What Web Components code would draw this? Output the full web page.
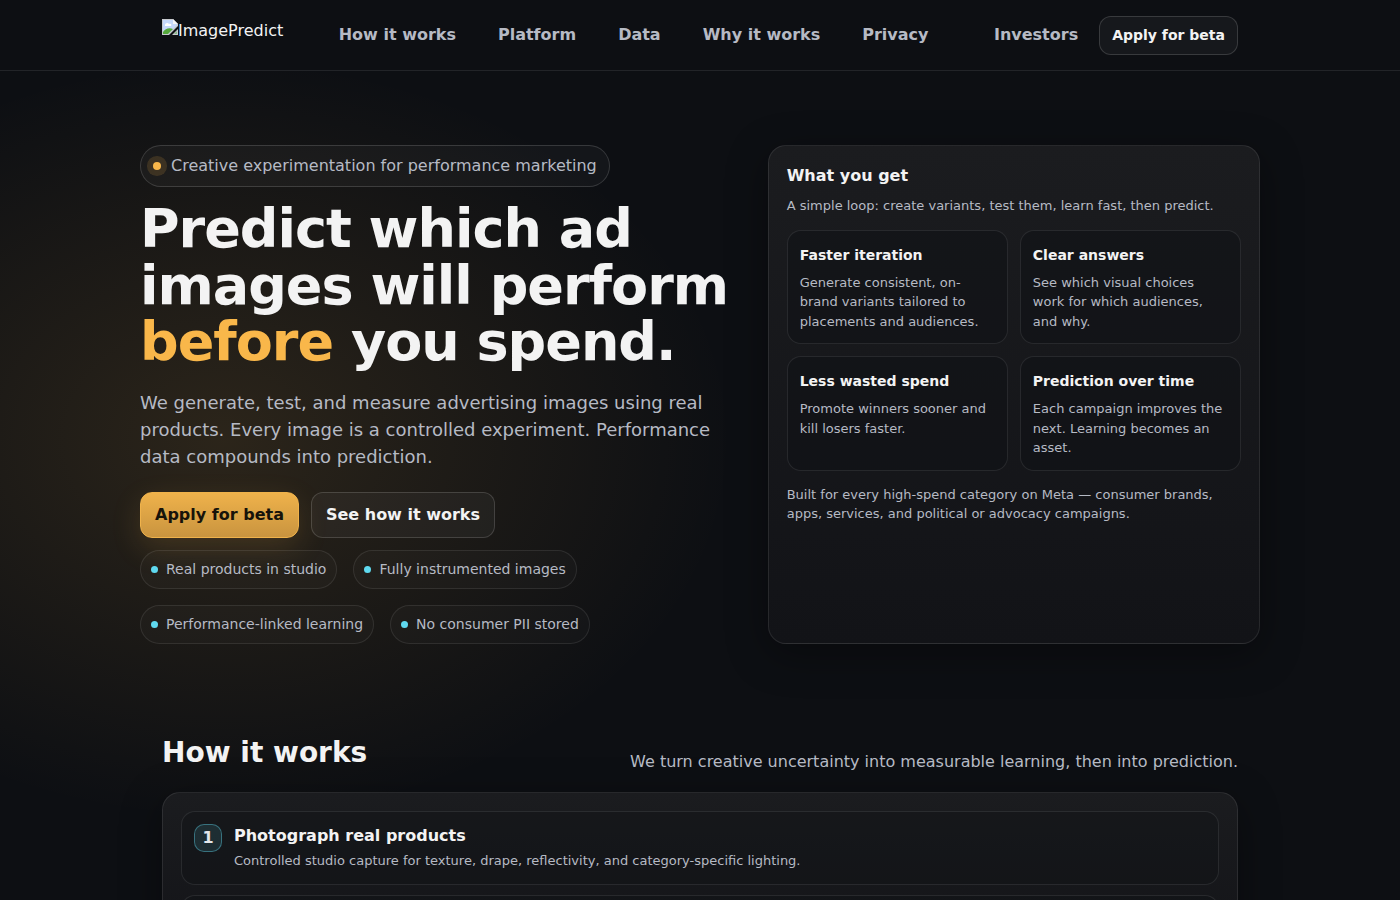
<!DOCTYPE html>
<html lang="en">
<head>
<meta charset="utf-8">
<meta name="viewport" content="width=device-width, initial-scale=1">
<title>ImagePredict</title>
<style>
:root {
  --text: #f3f3f3;
  --muted: #b6bac4;
  --line: rgba(255,255,255,.09);
  --line-strong: rgba(255,255,255,.15);
  --amber: #f9b74a;
  --cyan: #5fd9ef;
}
html { background: #0d0f13; }
body {
  margin: 0;
  color: var(--text);
  font: 16px/1.5 "DejaVu Sans", sans-serif;
  background: radial-gradient(510px 380px at 16% 440px, rgba(249,183,74,.13), rgba(249,183,74,0)) no-repeat;
}
</style>
</head>
<body>
<site-header></site-header>
<main>
  <hero-section></hero-section>
  <how-section></how-section>
</main>
<script>
const define = (name, html) => {
  const template = document.createElement('template');
  template.innerHTML = '<style>*{box-sizing:border-box}h1,h2,h3,p{margin:0}a{color:inherit;text-decoration:none}</style>' + html;
  customElements.define(name, class extends HTMLElement {
    constructor() {
      super();
      this.attachShadow({ mode: 'open' }).append(template.content.cloneNode(true));
    }
    connectedCallback() {
      const link = this.shadowRoot.querySelector('a[data-link]');
      if (link) link.href = this.getAttribute('href') || '#';
    }
  });
};

define('brand-logo', `
<style>
:host { display: block; }
a { display: flex; align-items: flex-start; height: 32px; }
svg { width: 16px; height: 16px; flex: none; }
</style>
<a data-link><svg viewBox="0 0 16 16" aria-hidden="true">
  <path d="M0 0h11l5 5v2L7 16H0z" fill="#c6c9ce"/>
  <path d="M1 1h10v4h4v1L6 15H1z" fill="#c5d8fb"/>
  <path d="M3 6c0-2 3-3 4-1 2-1 3 1 2 2H3z" fill="#fff"/>
  <path d="M1 15v-2c2-3 6-5 10-3l-5 5z" fill="#55a83c"/>
  <path d="M11 0v5h5z" fill="#f4f5f7"/>
  <path d="M16 10v6h-6z" fill="#c6c9ce"/><path d="M15 12v3h-3z" fill="#86b985"/>
</svg><slot></slot></a>`);

define('nav-link', `
<style>
:host { display: block; color: var(--muted); font-weight: 700; }
a { display: block; padding: 8px 10px; }
</style>
<a data-link><slot></slot></a>`);

define('action-button', `
<style>
:host { display: block; }
button {
  display: block; margin: 0; padding: 10px 14px; cursor: pointer;
  font: inherit; font-weight: 700; color: var(--text);
  border: 1px solid var(--line-strong); border-radius: 12px;
  background: rgba(255,255,255,.04);
}
:host([small]) button { padding: 8px 12px; font-size: 14px; }
:host([primary]) button {
  color: #17130a; border-color: #efb24b;
  background: linear-gradient(#efb24b, #c9943f);
  box-shadow: 0 10px 30px rgba(249,183,74,.15);
}
</style>
<button type="button"><slot></slot></button>`);

define('site-header', `
<style>
:host { display: block; background: #0d0f13; border-bottom: 1px solid var(--line); }
.bar {
  display: flex; align-items: center; justify-content: space-between;
  max-width: 1120px; margin: 0 auto; padding: 15px 22px; box-sizing: border-box;
}
nav { display: flex; gap: 22px; }
.side { display: flex; align-items: center; gap: 11px; }
</style>
<div class="bar">
  <brand-logo href="#top">ImagePredict</brand-logo>
  <nav aria-label="Primary">
    <nav-link href="#how">How it works</nav-link>
    <nav-link href="#platform">Platform</nav-link>
    <nav-link href="#data">Data</nav-link>
    <nav-link href="#why">Why it works</nav-link>
    <nav-link href="#privacy">Privacy</nav-link>
  </nav>
  <div class="side">
    <nav-link href="#investors">Investors</nav-link>
    <action-button small>Apply for beta</action-button>
  </div>
</div>`);

define('eyebrow-pill', `
<style>
:host {
  display: inline-flex; align-items: center; gap: 10px; padding: 8px 12px;
  border: 1px solid var(--line-strong); border-radius: 999px;
  background: rgba(255,255,255,.03); color: var(--muted);
}
i { width: 8px; height: 8px; border-radius: 50%; background: var(--amber); box-shadow: 0 0 0 6px rgba(249,183,74,.15); }
</style>
<i></i><slot></slot>`);

define('fact-chip', `
<style>
:host {
  display: flex; align-items: center; gap: 8px; padding: 8px 10px;
  border: 1px solid var(--line); border-radius: 999px;
  background: rgba(255,255,255,.02); color: var(--muted); font-size: 14px;
}
i { width: 7px; height: 7px; border-radius: 50%; background: var(--cyan); }
</style>
<i></i><slot></slot>`);

define('surface-card', `
<style>
:host {
  display: block; padding: 18px; border: 1px solid var(--line); border-radius: 18px;
  background: linear-gradient(#1b1c1f, #121317);
  box-shadow: 0 10px 40px rgba(0,0,0,.35);
}
</style>
<slot></slot>`);

define('feature-tile', `
<style>
:host {
  display: block; padding: 12px; border: 1px solid var(--line); border-radius: 14px;
  background: rgba(13,15,19,.5);
}
h3 { margin-bottom: 6px; font-size: 14px; line-height: 24px; }
p { font-size: 13px; color: var(--muted); }
</style>
<h3><slot name="title"></slot></h3><p><slot></slot></p>`);

define('step-row', `
<style>
:host {
  display: flex; align-items: flex-start; gap: 12px; padding: 12px 12px 13px;
  border: 1px solid var(--line); border-radius: 14px; background: rgba(13,15,19,.3);
}
.badge {
  display: grid; place-items: center; flex: none; width: 28px; height: 28px;
  border: 1px solid rgba(95,217,239,.4); border-radius: 10px;
  background: rgba(95,217,239,.12); color: #e2e6ea; font-weight: 700;
}
h3 { margin-bottom: 3px; font-size: 16px; }
p { font-size: 13px; color: var(--muted); }
</style>
<span class="badge"><slot name="number"></slot></span>
<div><h3><slot name="title"></slot></h3><p><slot></slot></p></div>`);

define('hero-section', `
<style>
:host {
  display: grid; grid-template-columns: 11fr 9fr; gap: 26px;
  max-width: 1120px; margin: 0 auto; padding: 74px 0 44px;
}
eyebrow-pill { margin-bottom: 14px; vertical-align: top; }
h1 { font-size: 54px; line-height: 1.05; letter-spacing: -1px; }
em { font-style: normal; color: var(--amber); }
.lead { margin: 18px 0 22px; font-size: 18px; color: var(--muted); }
.actions { display: flex; gap: 12px; margin-bottom: 12px; }
.chips { display: flex; flex-wrap: wrap; gap: 16px; }
h2 { margin-bottom: 8px; font-size: 16px; }
.note { font-size: 13px; color: var(--muted); }
.tiles { display: grid; grid-template-columns: 1fr 1fr; gap: 12px; margin: 14px 0; }
</style>
<div>
  <eyebrow-pill>Creative experimentation for performance marketing</eyebrow-pill>
  <h1>Predict which ad images will perform <em>before</em> you spend.</h1>
  <p class="lead">We generate, test, and measure advertising images using real products. Every image is a controlled experiment. Performance data compounds into prediction.</p>
  <div class="actions">
    <action-button primary>Apply for beta</action-button>
    <action-button>See how it works</action-button>
  </div>
  <div class="chips">
    <fact-chip>Real products in studio</fact-chip>
    <fact-chip>Fully instrumented images</fact-chip>
    <fact-chip>Performance-linked learning</fact-chip>
    <fact-chip>No consumer PII stored</fact-chip>
  </div>
</div>
<surface-card>
  <h2>What you get</h2>
  <p class="note">A simple loop: create variants, test them, learn fast, then predict.</p>
  <div class="tiles">
    <feature-tile><span slot="title">Faster iteration</span>Generate consistent, on-brand variants tailored to placements and audiences.</feature-tile>
    <feature-tile><span slot="title">Clear answers</span>See which visual choices work for which audiences, and why.</feature-tile>
    <feature-tile><span slot="title">Less wasted spend</span>Promote winners sooner and kill losers faster.</feature-tile>
    <feature-tile><span slot="title">Prediction over time</span>Each campaign improves the next. Learning becomes an asset.</feature-tile>
  </div>
  <p class="note">Built for every high-spend category on Meta — consumer brands, apps, services, and political or advocacy campaigns.</p>
</surface-card>`);

define('how-section', `
<style>
:host { display: block; box-sizing: border-box; max-width: 1120px; margin: 0 auto; padding: 44px 22px; }
header { display: flex; align-items: flex-end; justify-content: space-between; gap: 18px; margin-bottom: 18px; }
h2 { font-size: 28px; }
header p { color: var(--muted); }
.steps { display: grid; gap: 10px; }
</style>
<header>
  <h2>How it works</h2>
  <p>We turn creative uncertainty into measurable learning, then into prediction.</p>
</header>
<surface-card>
  <div class="steps">
    <step-row><span slot="number">1</span><span slot="title">Photograph real products</span>Controlled studio capture for texture, drape, reflectivity, and category-specific lighting.</step-row>
    <step-row></step-row>
  </div>
</surface-card>`);
</script>
</body>
</html>
